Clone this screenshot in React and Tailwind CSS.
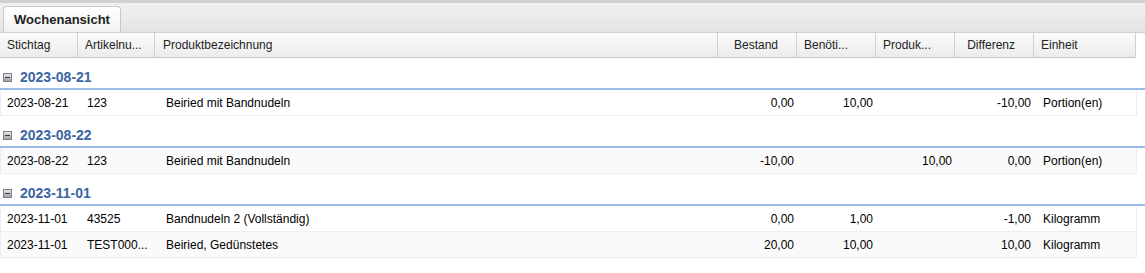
import React from "react";

const cols = [
  { key: "stichtag", label: "Stichtag", w: "w-[78px]", first: true },
  { key: "artikel", label: "Artikelnu...", w: "w-[77px]" },
  { key: "produkt", label: "Produktbezeichnung", w: "w-[563px]", wide: true },
  { key: "bestand", label: "Bestand", w: "w-[79px]", right: true },
  { key: "benoetigt", label: "Benöti...", w: "w-[79px]", right: true, hleft: true },
  { key: "produziert", label: "Produk...", w: "w-[79px]", right: true, hleft: true },
  { key: "differenz", label: "Differenz", w: "w-[79px]", right: true },
  { key: "einheit", label: "Einheit", w: "w-[102px]" },
];

const groups = [
  {
    date: "2023-08-21",
    rows: [
      { stichtag: "2023-08-21", artikel: "123", produkt: "Beiried mit Bandnudeln", bestand: "0,00", benoetigt: "10,00", produziert: "", differenz: "-10,00", einheit: "Portion(en)" },
    ],
  },
  {
    date: "2023-08-22",
    rows: [
      { stichtag: "2023-08-22", artikel: "123", produkt: "Beiried mit Bandnudeln", bestand: "-10,00", benoetigt: "", produziert: "10,00", differenz: "0,00", einheit: "Portion(en)" },
    ],
  },
  {
    date: "2023-11-01",
    rows: [
      { stichtag: "2023-11-01", artikel: "43525", produkt: "Bandnudeln 2 (Vollständig)", bestand: "0,00", benoetigt: "1,00", produziert: "", differenz: "-1,00", einheit: "Kilogramm" },
      { stichtag: "2023-11-01", artikel: "TEST000...", produkt: "Beiried, Gedünstetes", bestand: "20,00", benoetigt: "10,00", produziert: "", differenz: "10,00", einheit: "Kilogramm" },
    ],
  },
];

function MinusIcon() {
  return (
    <span className="flex h-[9px] w-[9px] items-center justify-center border border-[#7b7f86] bg-gradient-to-b from-[#e6e8eb] to-[#9ea3aa]">
      <span className="h-[1px] w-[5px] bg-[#3b3f45]" />
    </span>
  );
}

export default function App() {
  let idx = 0;
  return (
    <div className="h-[273px] w-[1145px] overflow-hidden bg-white text-[12px] text-black" style={{ fontFamily: '"Liberation Sans", Arial, sans-serif' }}>
      {/* tab strip */}
      <div className="flex h-[33px] items-end border-t-[3px] border-b border-[#d0d0d0] bg-gradient-to-b from-[#f0f0f0] to-[#e4e4e4] pl-[3px]">
        <div className="flex h-[26px] w-[118px] items-center justify-center rounded-t-[4px] border border-b-0 border-[#c8c8c8] bg-gradient-to-b from-[#ffffff] to-[#f1f1f1] font-bold text-[13px] text-[#222]">
          Wochenansicht
        </div>
      </div>

      {/* column headers */}
      <div className="flex h-[25px] w-[1136px] border-b border-[#c5c5c5] bg-gradient-to-b from-[#fbfbfb] to-[#ececec] text-[#222]">
        {cols.map((c) => (
          <div
            key={c.key}
            className={`${c.w} flex shrink-0 items-center border-r border-[#d0d0d0] ${c.right && !c.hleft ? "justify-end pr-[18px]" : c.wide ? "pl-[8px]" : "pl-[7px]"} ${c.first ? "pl-[6px]" : ""}`}
          >
            {c.label}
          </div>
        ))}
      </div>

      {groups.map((g) => (
        <div key={g.date}>
          <div className="flex h-[32px] items-start gap-[8px] border-b-2 border-[#99bbe8] pl-[3px] pt-[11px]">
            <span className="pt-[4px]">
              <MinusIcon />
            </span>
            <span className="text-[14px] font-bold leading-[16px] text-[#3b65a3]">{g.date}</span>
          </div>
          {g.rows.map((r) => {
            const alt = idx++ % 2 === 1;
            return (
              <div key={r.artikel + r.produkt} className={`flex h-[26px] w-[1137px] border-x border-b border-[#ededed] ${alt ? "bg-[#fafafa]" : "bg-white"}`}>
                {cols.map((c, i) => (
                  <div
                    key={c.key}
                    className={`${i === 0 ? "w-[77px]" : c.w} flex shrink-0 items-center overflow-hidden whitespace-nowrap ${c.right ? "justify-end pr-[3px]" : i === 0 ? "pl-[6px]" : c.wide ? "pl-[11px]" : "pl-[9px]"}`}
                  >
                    {r[c.key]}
                  </div>
                ))}
              </div>
            );
          })}
        </div>
      ))}
    </div>
  );
}
